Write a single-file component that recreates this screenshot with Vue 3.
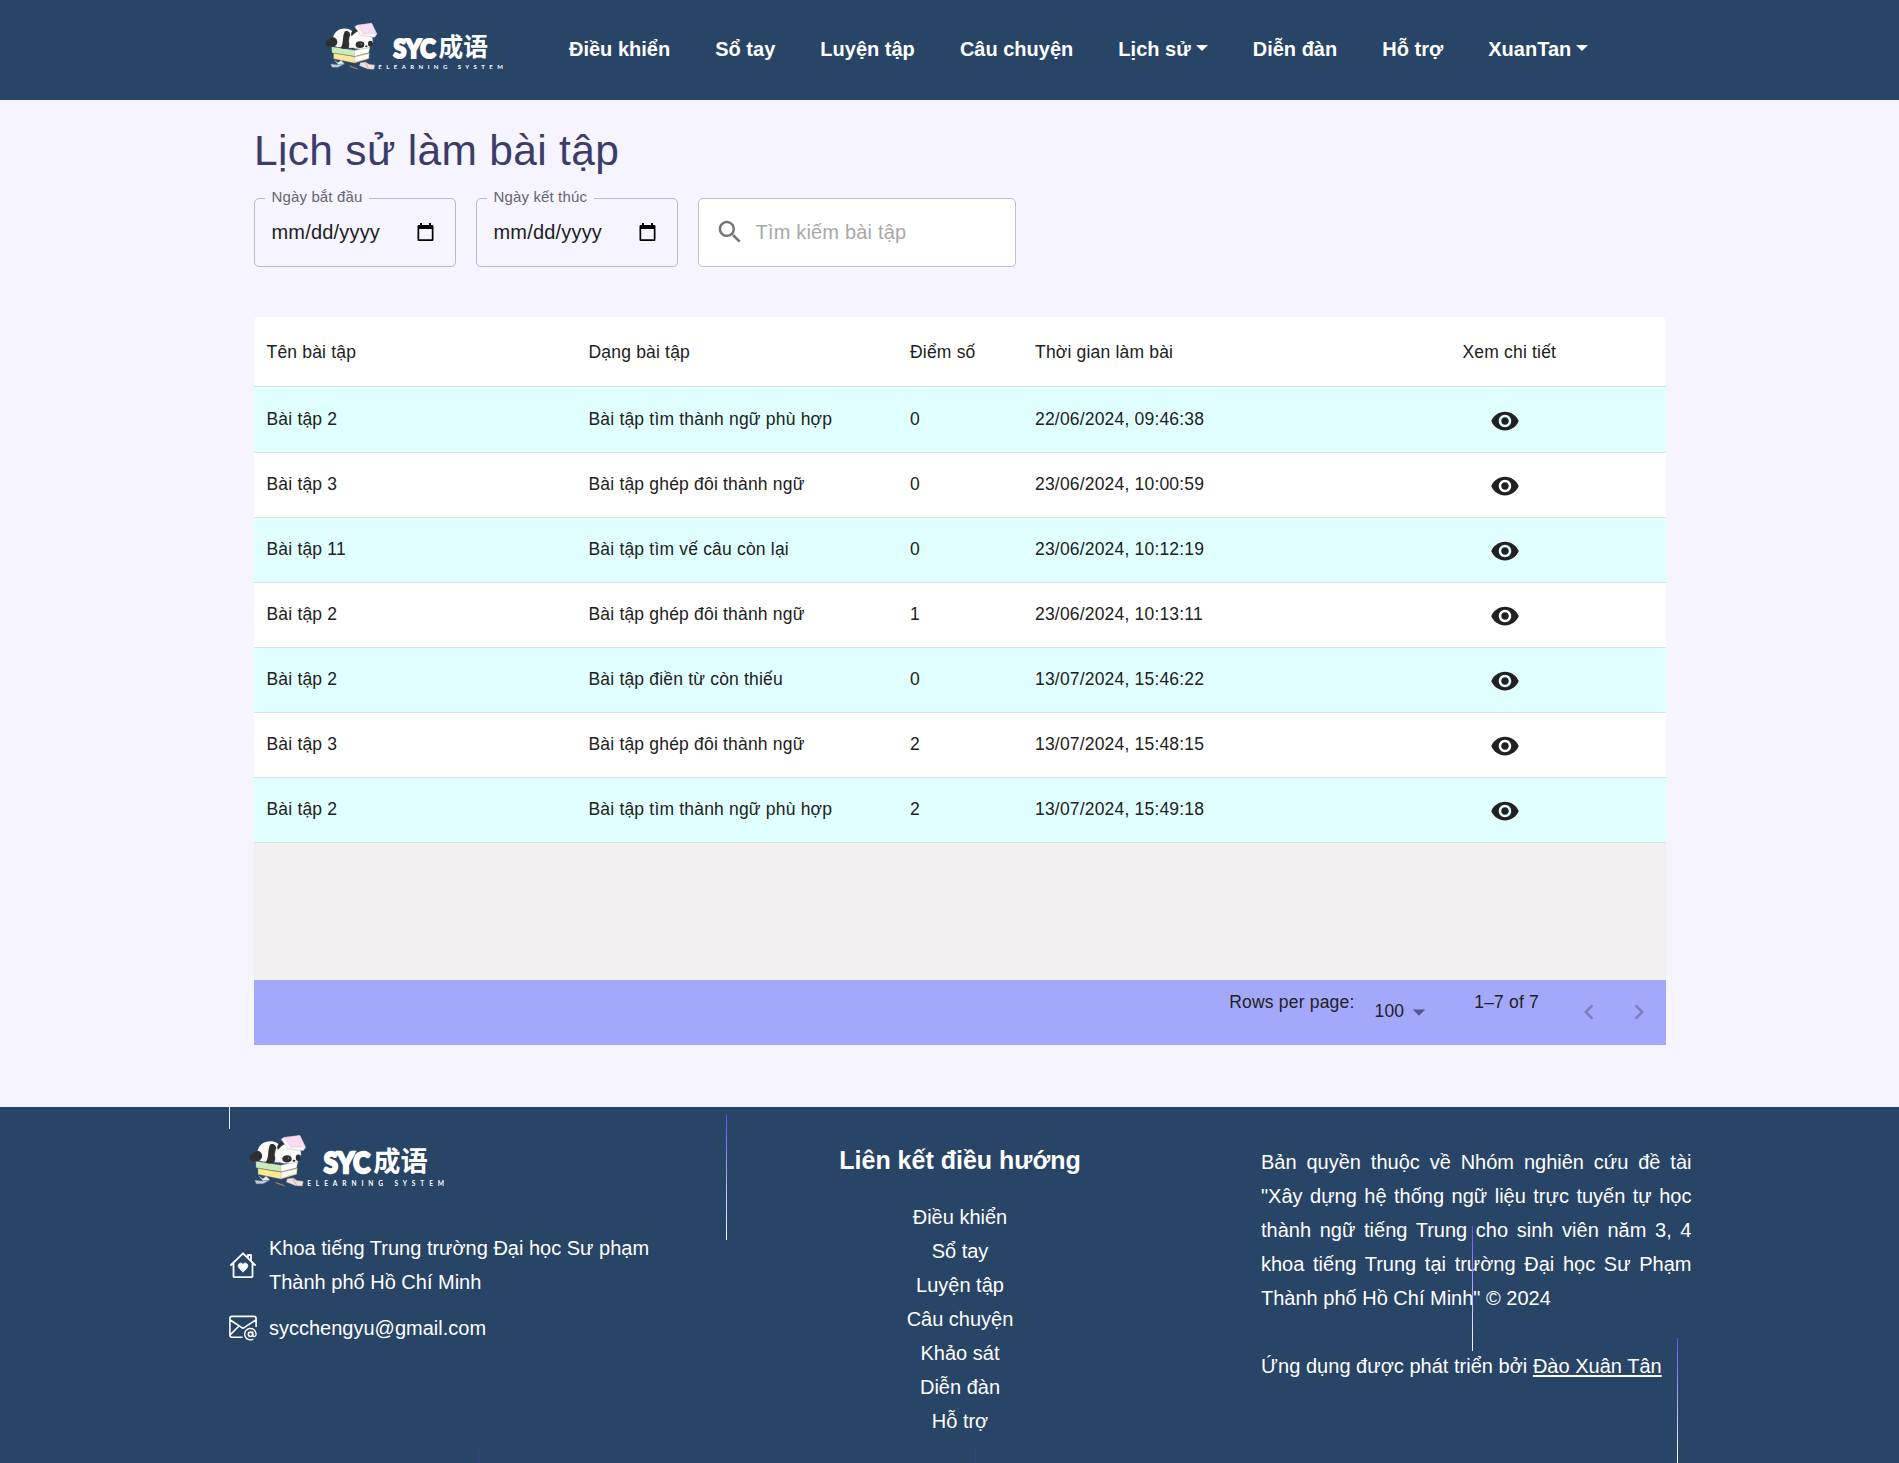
<script setup>
import { h } from 'vue'

const navItems = [
  { label: 'Điều khiển' },
  { label: 'Sổ tay' },
  { label: 'Luyện tập' },
  { label: 'Câu chuyện' },
  { label: 'Lịch sử', caret: true },
  { label: 'Diễn đàn' },
  { label: 'Hỗ trợ' },
  { label: 'XuanTan', caret: true },
]

const dateFields = ['Ngày bắt đầu', 'Ngày kết thúc']

const columns = ['Tên bài tập', 'Dạng bài tập', 'Điểm số', 'Thời gian làm bài', 'Xem chi tiết']

const rows = [
  ['Bài tập 2', 'Bài tập tìm thành ngữ phù hợp', 0, '22/06/2024, 09:46:38'],
  ['Bài tập 3', 'Bài tập ghép đôi thành ngữ', 0, '23/06/2024, 10:00:59'],
  ['Bài tập 11', 'Bài tập tìm vế câu còn lại', 0, '23/06/2024, 10:12:19'],
  ['Bài tập 2', 'Bài tập ghép đôi thành ngữ', 1, '23/06/2024, 10:13:11'],
  ['Bài tập 2', 'Bài tập điền từ còn thiếu', 0, '13/07/2024, 15:46:22'],
  ['Bài tập 3', 'Bài tập ghép đôi thành ngữ', 2, '13/07/2024, 15:48:15'],
  ['Bài tập 2', 'Bài tập tìm thành ngữ phù hợp', 2, '13/07/2024, 15:49:18'],
]

const footerLinks = ['Điều khiển', 'Sổ tay', 'Luyện tập', 'Câu chuyện', 'Khảo sát', 'Diễn đàn', 'Hỗ trợ']

const dark = '#2f2f31'
const shape = (d, fill, extra = {}) => h('path', { d, fill, ...extra })

// Brand mark shared by the header and the page footer
const BrandLogo = () =>
  h('svg', { viewBox: '0 0 180 50' }, [
    h('g', { transform: 'scale(.33333) translate(-45 -36)' }, [
      // books
      shape('M65 110L133 121L180 110L176 126L135 139L66 128Z', '#cdebb8', { stroke: '#8d9a80', 'stroke-width': 1 }),
      shape('M133 122L179 112L176 128L134 139Z', '#ffffff', { stroke: '#9a9a90', 'stroke-width': 1 }),
      shape('M71 130L134 140L178 129L176 146L134 159L71 146Z', '#fbe995', { stroke: '#a09468', 'stroke-width': 1 }),
      shape('M134 141L177 131L176 145L134 157Z', '#fffef5', { stroke: '#9a9a90', 'stroke-width': 1 }),
      // body
      shape('M69 83C74 62 92 53 110 56C124 58 132 66 135 78L128 114L83 111C68 108 65 96 69 83Z', '#fafafa'),
      shape('M70 82C61 82 58 91 49 93C45 98 48 110 58 111C68 112 80 108 82 98C83 90 77 83 70 82Z', dark),
      shape('M105 64C115 61 122 67 121 82L116 114C108 117 98 118 92 113C102 102 96 76 105 64Z', dark),
      shape('M118 84C121 66 137 58 154 61L187 81C190 92 187 104 181 110C168 118 138 119 126 112C117 105 115 94 118 84Z', '#fafafa', { stroke: '#a9a9ab', 'stroke-width': 1 }),
      shape('M125 79C120 69 129 57 140 59L147 63C138 64 132 72 125 79Z', dark),
      h('ellipse', { cx: 150, cy: 104, rx: 13, ry: 10, fill: dark }),
      h('ellipse', { cx: 181, cy: 101, rx: 7, ry: 9, fill: dark }),
      h('ellipse', { cx: 169, cy: 109, rx: 4, ry: 2.5, fill: dark }),
      h('circle', { cx: 154, cy: 102, r: 2, fill: '#999' }),
      // open book on the head
      shape('M134 50L152 76L194 82L201 72L185 40L142 45Z', '#fffafc', { stroke: '#b9a9b5', 'stroke-width': 1.2 }),
      shape('M143 46L185 40L199 71L160 72Z', '#f8dcf3', { stroke: '#cdb4c8', 'stroke-width': 1 }),
      // loose pages
      shape('M73 150L85 164L103 161L93 151L84 158Z', '#e9edf2', { stroke: '#92a2b2', 'stroke-width': 1 }),
      shape('M62 162L80 164L103 162L84 172L66 172Z', '#c3cedb', { stroke: '#7388a4', 'stroke-width': 1 }),
      shape('M117 166L142 175L144 179L121 171Z', '#a5806c'),
      shape('M151 158L167 156L177 163L194 165L192 178L174 177L148 167Z', '#eadfe2', { stroke: '#b3919a', 'stroke-width': 1.2 }),
      shape('M165 157L176 175', 'none', { stroke: '#a87881', 'stroke-width': 1.5 }),
    ]),
    h('text', { x: 68.5, y: 35.8, class: 'brand-syc', textLength: 42, lengthAdjust: 'spacingAndGlyphs' }, 'SYC'),
    h('text', { x: 113.5, y: 33.5, class: 'brand-cjk', textLength: 49.5, lengthAdjust: 'spacingAndGlyphs' }, '成语'),
    h('text', { x: 53.3, y: 47.2, class: 'brand-sub', textLength: 124.5 }, 'ELEARNING SYSTEM'),
  ])
</script>

<template>
  <div class="page">
    <header class="topbar">
      <BrandLogo class="logo logo-top" />
      <nav class="nav">
        <a v-for="item in navItems" :key="item.label" class="nav-link">
          {{ item.label }}<i v-if="item.caret" class="caret"></i>
        </a>
      </nav>
    </header>

    <main class="content">
      <h1 class="title">Lịch sử làm bài tập</h1>

      <div class="filters">
        <div v-for="label in dateFields" :key="label" class="field date-field">
          <label class="field-label">{{ label }}</label>
          <span>mm/dd/yyyy</span>
          <svg class="calendar" viewBox="0 0 17 19">
            <path fill-rule="evenodd" d="M3 0h2v2h7V0h2v2h1.2a1.3 1.3 0 0 1 1.3 1.3v13.4a1.3 1.3 0 0 1-1.3 1.3H1.8A1.3 1.3 0 0 1 .5 16.7V3.3A1.3 1.3 0 0 1 1.8 2H3zM2.2 6v10.3h12.6V6z" />
          </svg>
        </div>
        <div class="field search-field">
          <svg class="search-icon" viewBox="0 0 24 24">
            <path d="M15.5 14h-.79l-.28-.27C15.41 12.59 16 11.11 16 9.5 16 5.91 13.09 3 9.5 3S3 5.91 3 9.5 5.91 16 9.5 16c1.61 0 3.09-.59 4.23-1.57l.27.28v.79l5 4.99L20.49 19l-4.99-5zm-6 0C7.01 14 5 11.99 5 9.5S7.01 5 9.5 5 14 7.01 14 9.5 11.99 14 9.5 14z" />
          </svg>
          <span>Tìm kiếm bài tập</span>
        </div>
      </div>

      <section class="grid">
        <div class="grid-row grid-head">
          <div v-for="col in columns" :key="col">{{ col }}</div>
        </div>
        <div v-for="(row, i) in rows" :key="i" class="grid-row grid-body">
          <div v-for="(cell, j) in row" :key="j">{{ cell }}</div>
          <div class="view-cell">
            <svg class="eye" viewBox="0 0 24 24">
              <path d="M12 4.5C7 4.5 2.73 7.61 1 12c1.73 4.39 6 7.5 11 7.5s9.27-3.11 11-7.5c-1.73-4.39-6-7.5-11-7.5zM12 17c-2.76 0-5-2.24-5-5s2.24-5 5-5 5 2.24 5 5-2.24 5-5 5zm0-8c-1.66 0-3 1.34-3 3s1.34 3 3 3 3-1.34 3-3-1.34-3-3-3z" />
            </svg>
          </div>
        </div>
        <div class="grid-space"></div>
        <div class="pagination">
          <span class="per-page">Rows per page:</span>
          <span class="page-size">100</span>
          <svg class="drop" viewBox="0 0 24 24"><path d="M7 10l5 5 5-5z" /></svg>
          <span class="range">1–7 of 7</span>
          <svg class="chevron" viewBox="0 0 24 24"><path d="M15.41 16.59L10.83 12l4.58-4.59L14 6l-6 6 6 6 1.41-1.41z" /></svg>
          <svg class="chevron" viewBox="0 0 24 24"><path d="M8.59 16.59L13.17 12 8.59 7.41 10 6l6 6-6 6-1.41-1.41z" /></svg>
        </div>
      </section>
    </main>

    <footer class="footer">
      <div class="footer-about">
        <BrandLogo class="logo logo-footer" />
        <div class="contact address">
          <svg viewBox="0 0 28 28" fill="none" stroke="#fff" stroke-width="1.8" stroke-linecap="round" stroke-linejoin="round">
            <path d="M2 14L14 2.3L26 14M4.5 12v13.2a1 1 0 0 0 1 1h17a1 1 0 0 0 1-1V12M19 6.5V4h3v5.5" />
            <path fill="#fff" stroke-width="1" d="M14 20.5C10.5 18.3 9.3 16.6 9.3 14.6c0-2.6 3.3-3.3 4.7-1.2 1.4-2.1 4.7-1.4 4.7 1.2 0 2-1.2 3.7-4.7 5.9z" />
          </svg>
          <p>Khoa tiếng Trung trường Đại học Sư phạm<br />Thành phố Hồ Chí Minh</p>
        </div>
        <div class="contact">
          <svg viewBox="0 0 28 28" fill="none" stroke="#fff" stroke-width="1.6" stroke-linecap="round" stroke-linejoin="round">
            <path d="M13 23.2H3a2.1 2.1 0 0 1-2.1-2.1V4.5A2.1 2.1 0 0 1 3 2.4h22a2.1 2.1 0 0 1 2.1 2.1v8M1.2 6L14 14.3 26.8 6M1.5 20.5L10 12" />
            <circle cx="21.5" cy="20.3" r="2.2" />
            <path d="M23.7 18v3c0 2.3 3.4 2 3.4-1a5.7 5.7 0 1 0-3.2 5.3" stroke-width="1.4" />
          </svg>
          <p>sycchengyu@gmail.com</p>
        </div>
      </div>

      <div class="footer-links">
        <h2>Liên kết điều hướng</h2>
        <a v-for="link in footerLinks" :key="link">{{ link }}</a>
      </div>

      <div class="footer-copy">
        <p>Bản quyền thuộc về Nhóm nghiên cứu đề tài "Xây dựng hệ thống ngữ liệu trực tuyến tự học thành ngữ tiếng Trung cho sinh viên năm 3, 4 khoa tiếng Trung tại trường Đại học Sư Phạm Thành phố Hồ Chí Minh" © 2024</p>
        <p class="credit">Ứng dụng được phát triển bởi <u>Đào Xuân Tân</u></p>
      </div>

      <!-- falling light streaks drawn over the footer -->
      <i class="streak streak-a"></i>
      <i class="streak streak-b"></i>
      <i class="streak streak-c"></i>
      <i class="streak streak-d"></i>
      <i class="streak streak-e"></i>
      <i class="streak streak-f"></i>
    </footer>
  </div>
</template>

<style>
body {
  margin: 0;
  background: #f5f4ff;
}
</style>

<style scoped>
.page {
  width: 1899px;
  height: 1463px;
  overflow: hidden;
  display: flex;
  flex-direction: column;
  font-family: 'Liberation Sans', Arial, 'Noto Sans CJK SC', sans-serif;
  font-size: 20px;
  color: #212121;
  background: #f5f4ff;
}
p,
h1,
h2 {
  margin: 0;
}
.topbar {
  height: 100px;
  display: flex;
  align-items: flex-start;
  padding-left: 325px;
  background: #284466;
}
.logo {
  display: block;
  flex: none;
  overflow: visible;
}
.logo-top {
  width: 180px;
  height: 50px;
  margin-top: 22px;
}
.logo :deep(text) {
  fill: #fff;
}
.logo :deep(.brand-syc) {
  font: 900 26px Lato, 'Liberation Sans', sans-serif;
  stroke: #fff;
  stroke-width: 2.2px;
}
.logo :deep(.brand-cjk) {
  font: 700 25px 'Noto Sans CJK SC', sans-serif;
}
.logo :deep(.brand-sub) {
  font: 700 6px Lato, 'Liberation Sans', sans-serif;
}
.nav {
  display: flex;
  gap: 45.1px;
  margin-left: 64px;
  height: 98px;
  align-items: center;
}
.nav-link {
  color: #fff;
  font-weight: 700;
  line-height: 30px;
  white-space: nowrap;
}
.caret {
  display: inline-block;
  margin-left: 5px;
  vertical-align: 5px;
  border: 6px solid transparent;
  border-top-color: #fff;
  border-bottom: 0;
}
.content {
  width: 1412px;
  height: 1007px;
  margin-left: 254px;
}
.title {
  padding-top: 25px;
  font-size: 42.5px;
  line-height: 52.5px;
  font-weight: 400;
  letter-spacing: 0.312px;
  color: #3c3c68;
}
.filters {
  display: flex;
  gap: 20px;
  margin-top: 20.5px;
}
.field {
  position: relative;
  box-sizing: border-box;
  height: 69px;
  display: flex;
  align-items: center;
  border: 1px solid #bbb9c3;
  border-radius: 5px;
  letter-spacing: 0.188px;
}
.date-field {
  width: 202px;
  justify-content: space-between;
  padding: 0 21px 0 16.5px;
}
.field-label {
  position: absolute;
  left: 10px;
  top: -12px;
  padding: 0 6.5px;
  font-size: 15px;
  line-height: 20px;
  letter-spacing: 0.14px;
  color: #666570;
  background: #f5f4ff;
}
.calendar {
  width: 17px;
  height: 19px;
  margin-bottom: 1px;
  fill: #000;
}
.search-field {
  width: 318px;
  padding-left: 15.5px;
  gap: 11px;
  background: #fff;
  border-color: #c0c0c0;
  color: #a8a8a8;
}
.search-icon {
  width: 30px;
  height: 30px;
  margin-bottom: 2px;
  fill: #757575;
}
.grid {
  margin-top: 50px;
  display: flex;
  flex-direction: column;
  border-radius: 5px 5px 0 0;
  overflow: hidden;
  font-size: 17.5px;
  letter-spacing: 0.187px;
}
.grid-row {
  box-sizing: border-box;
  height: 65px;
  display: grid;
  grid-template-columns: 322px 321.5px 125px 427.5px 216px;
  align-items: center;
  padding-bottom: 2px;
  border-bottom: 1px solid #e0e0e0;
  background: #fff;
}
.grid-row > div {
  padding-left: 12.5px;
}
.grid-head {
  height: 70px;
  padding: 2px 0 0;
}
.grid-head + .grid-body {
  height: 66px;
  padding-bottom: 1px;
}
.grid-body:nth-child(even) {
  background: #e0ffff;
}
.grid-row > .view-cell {
  padding: 4px 0 0 40px;
}
.eye {
  display: block;
  width: 30px;
  height: 30px;
  fill: #212121;
}
.grid-space {
  height: 137px;
  background: #f2f0f0;
}
.pagination {
  height: 65px;
  display: flex;
  align-items: center;
  justify-content: flex-end;
  padding-right: 12px;
  box-sizing: border-box;
  background: #a4a8fb;
}
.per-page,
.range {
  margin-bottom: 20px;
}
.per-page {
  margin-right: 20px;
}
.page-size {
  margin-bottom: 2px;
}
.drop {
  width: 30px;
  height: 30px;
  margin-bottom: 1px;
  fill: #56578a;
}
.range {
  margin-left: 40px;
  margin-right: 35px;
}
.chevron {
  width: 30px;
  height: 30px;
  margin-bottom: 2px;
  fill: #7c7ec0;
}
.chevron + .chevron {
  margin-left: 20px;
}
.footer {
  position: relative;
  flex: 1;
  display: flex;
  align-items: flex-start;
  background: #284466;
  color: #fff;
  line-height: 34px;
}
.footer-about {
  width: 498px;
  margin-left: 229px;
}
.logo-footer {
  width: 199px;
  height: 55px;
  margin: 27px 0 0 18.5px;
}
.contact {
  display: flex;
  align-items: center;
  gap: 12px;
  margin-top: 12px;
}
.contact svg {
  width: 28px;
  height: 28px;
  flex: none;
}
.address {
  margin-top: 42px;
}
.footer-links {
  width: 466px;
  display: flex;
  flex-direction: column;
  align-items: center;
  padding-top: 33px;
}
.footer-links h2 {
  font-size: 25px;
  line-height: 40px;
  margin-bottom: 20px;
}
.footer-copy {
  width: 430.5px;
  margin-left: 68px;
  padding-top: 38px;
  text-align: justify;
}
.credit {
  margin-top: 34px;
  letter-spacing: 0.02px;
}
.credit u {
  text-underline-offset: 2px;
}
.streak {
  position: absolute;
  width: 1px;
  height: 125px;
  background: linear-gradient(#6a4bfa, #fff);
}
.streak-a { left: 229px; top: 0; height: 22px; background: #f0edff; }
.streak-b { left: 726px; top: 8px; }
.streak-c { left: 1472px; top: 119px; }
.streak-d { left: 1677px; top: 231px; }
.streak-e { left: 478px; top: 342px; height: 14px; background: #3a4187; }
.streak-f { left: 975px; top: 342px; height: 14px; background: #34447c; }
</style>
